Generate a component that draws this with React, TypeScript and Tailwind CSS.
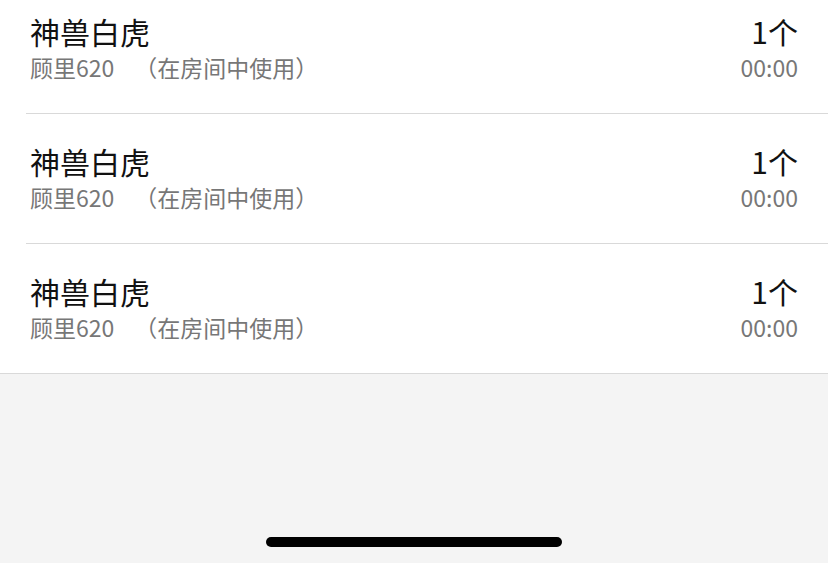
/** Gift usage records list — a short list of items with count and time, above an empty footer area. */

type GiftRecord = {
  id: number;
  name: string;
  owner: string;
  note: string;
  count: string;
  time: string;
};

const records: GiftRecord[] = [
  { id: 1, name: "神兽白虎", owner: "顾里620", note: "（在房间中使用）", count: "1个", time: "00:00" },
  { id: 2, name: "神兽白虎", owner: "顾里620", note: "（在房间中使用）", count: "1个", time: "00:00" },
  { id: 3, name: "神兽白虎", owner: "顾里620", note: "（在房间中使用）", count: "1个", time: "00:00" },
];

function RecordRow({ record, last }: { record: GiftRecord; last: boolean }) {
  return (
    <div className={last ? "border-b border-[#d9d9d9]" : "ml-[26px] border-b border-[#d9d9d9]"}>
      <div
        className={
          last
            ? "flex h-[129px] items-start justify-between pl-[30px] pr-[30px] pt-[29px]"
            : "flex h-[129px] items-start justify-between pl-[4px] pr-[30px] pt-[29px]"
        }
      >
        <div className="flex flex-col">
          <span className="text-[30px] leading-[36px] text-[#111111]">{record.name}</span>
          <span className="text-[23px] leading-[36px] text-[#777777]">
            {record.owner}
            <span className="ml-[20px]">{record.note}</span>
          </span>
        </div>
        <div className="flex flex-col items-end">
          <span className="text-[30px] leading-[36px] text-[#111111]">{record.count}</span>
          <span className="text-[23px] leading-[36px] text-[#777777]">{record.time}</span>
        </div>
      </div>
    </div>
  );
}

export default function App() {
  return (
    <div className="flex h-[563px] w-[828px] flex-col overflow-hidden bg-[#f4f4f4] font-['Noto_Sans_CJK_SC',sans-serif]">
      <div className="-mt-[16px] bg-white">
        {records.map((r, i) => (
          <RecordRow key={r.id} record={r} last={i === records.length - 1} />
        ))}
      </div>
      <div className="flex flex-1 items-end justify-center pb-[16px]">
        <div className="h-[10px] w-[296px] rounded-full bg-black" />
      </div>
    </div>
  );
}
